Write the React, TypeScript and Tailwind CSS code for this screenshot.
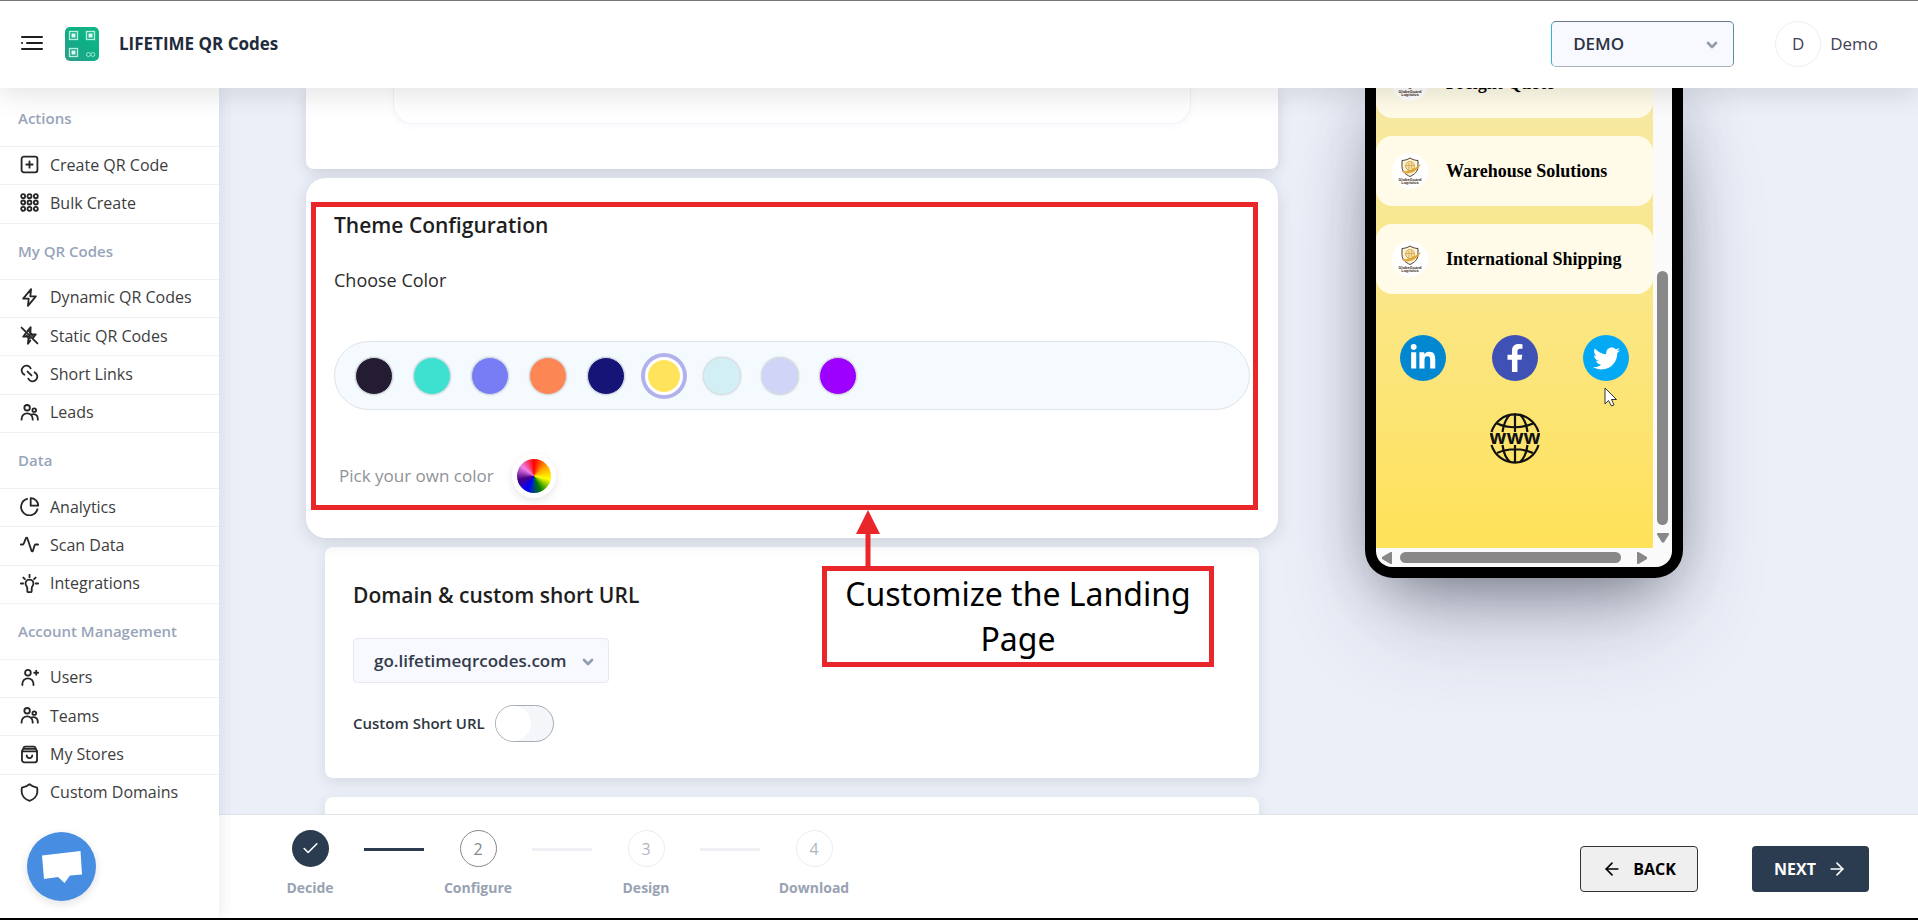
import { useState } from 'react';
import type { ReactNode } from 'react';
import { ArrowLeft, ArrowRight, Check, ChevronDown } from 'lucide-react';
import { FaFacebookF, FaLinkedinIn, FaTwitter } from 'react-icons/fa';

interface NavItem {
  label: string;
  icon: ReactNode;
}

interface NavSection {
  title: string;
  items: NavItem[];
}

const people = (
  <>
    <circle cx="9" cy="6" r="3.500" />
    <circle cx="18" cy="9" r="2.300" />
    <path d="M2 21v-1a7 7 0 0 1 14 0v1" />
    <path d="M14.500 14.500c4-1.500 8 .8 8 5V21" />
  </>
);

const sections: NavSection[] = [
  {
    title: 'Actions',
    items: [
      {
        label: 'Create QR Code',
        icon: (
          <>
            <rect x="2" y="2" width="20" height="20" rx="3" />
            <path d="M12 8v8M8 12h8" />
          </>
        ),
      },
      {
        label: 'Bulk Create',
        icon: (
          <>
            {[4, 12, 20].map((y) =>
              [4, 12, 20].map((x) => <circle key={`${x}-${y}`} cx={x} cy={y} r="2.500" />)
            )}
          </>
        ),
      },
    ],
  },
  {
    title: 'My QR Codes',
    items: [
      { label: 'Dynamic QR Codes', icon: <path d="M14 1.500 4 13.500h7l-1 9L20 10.500h-7z" /> },
      {
        label: 'Static QR Codes',
        icon: (
          <>
            <path d="M9.500 6.500 13.500 1.500 13 10.500h7l-3.500 4.500M13 18.500 10 22.500l1-9H4l3-4" />
            <path d="m2 2 20 20" />
            <path d="m11 6 5 6.500M8 12l4.500 4" />
          </>
        ),
      },
      {
        label: 'Short Links',
        icon: (
          <>
            <path d="M13.500 5.500A6 6 0 1 0 5.500 13.500" />
            <path d="M10.500 18.500A6 6 0 1 0 18.500 10.500" />
            <path d="m9.500 9.500 5 5" />
          </>
        ),
      },
      { label: 'Leads', icon: people },
    ],
  },
  {
    title: 'Data',
    items: [
      {
        label: 'Analytics',
        icon: (
          <>
            <path d="M9 2.500a10.500 10.500 0 1 0 13 13" />
            <path d="M13.500 1.500v9.500H23a9.500 9.500 0 0 0-9.500-9.500z" />
          </>
        ),
      },
      {
        label: 'Scan Data',
        icon: <path d="M1 12h2.500c.7 0 1-.4 1.300-1.200L7.500 4c.4-1 1.500-1 1.800 0l5.200 16c.3 1 1.400 1 1.800 0l2.200-7c.3-.7.700-1 1.300-1H23" />,
      },
      {
        label: 'Integrations',
        icon: (
          <>
            <path d="M12 1v3M1 12h3M20 12h3M4.200 4.500l2 2M19.800 4.500l-2 2" />
            <path d="M9.200 17.500c0-1.700-2.200-2.700-2.200-5.500a5 5 0 0 1 10 0c0 2.800-2.200 3.800-2.200 5.500v4a1.500 1.500 0 0 1-1.500 1.500h-2.600a1.500 1.500 0 0 1-1.500-1.500z" />
          </>
        ),
      },
    ],
  },
  {
    title: 'Account Management',
    items: [
      {
        label: 'Users',
        icon: (
          <>
            <circle cx="10" cy="6" r="3.600" />
            <path d="M3 21.500V20a7 7 0 0 1 14 0v1.500" />
            <path d="M20.500 3.500v5M18 6h5" />
          </>
        ),
      },
      { label: 'Teams', icon: people },
      {
        label: 'My Stores',
        icon: (
          <>
            <path d="M2.500 8h19v11a3 3 0 0 1-3 3h-13a3 3 0 0 1-3-3z" />
            <path d="M2.500 8 4.500 3.500A2 2 0 0 1 6.400 2h11.200a2 2 0 0 1 1.900 1.500L21.500 8" />
            <path d="M5 5h14M8.500 13a3.500 3.500 0 0 0 7 0" />
          </>
        ),
      },
      {
        label: 'Custom Domains',
        icon: <path d="M12 1.500c2.500 2 6 3.500 9.500 4.300.5 2 .5 4 .3 6.200-.5 5-4.300 8.500-9.800 10.500-5.500-2-9.300-5.500-9.800-10.500-.2-2.200-.2-4.200.3-6.200C6 5 9.500 3.500 12 1.500z" />,
      },
    ],
  },
];

const swatches = [
  { name: 'Midnight', className: 'bg-[#231c33]' },
  { name: 'Turquoise', className: 'bg-[#3ee0d0]' },
  { name: 'Periwinkle', className: 'bg-[#787df5]' },
  { name: 'Coral', className: 'bg-[#fc8755]' },
  { name: 'Navy', className: 'bg-[#141577]' },
  { name: 'Yellow', className: 'bg-[#ffe35b]' },
  { name: 'Ice', className: 'bg-[#d3eff6]' },
  { name: 'Lavender', className: 'bg-[#d0d5f7]' },
  { name: 'Violet', className: 'bg-[#9d00ff]' },
];

const steps = ['Decide', 'Configure', 'Design', 'Download'];

const links = ['Freight Quote', 'Warehouse Solutions', 'International Shipping'];

function BrandLogo() {
  return (
    <svg viewBox="0 0 34 34" className="h-[34px] w-[34px]" aria-hidden="true">
      <defs>
        <linearGradient id="brand" x1="0" y1="1" x2="1" y2="0">
          <stop offset="0" stopColor="#2f9c8c" />
          <stop offset="0.500" stopColor="#0fae86" />
          <stop offset="1" stopColor="#12b886" />
        </linearGradient>
      </defs>
      <rect width="34" height="34" rx="5" fill="url(#brand)" />
      {[
        [4, 4],
        [21, 4],
        [4, 21],
      ].map(([x, y]) => (
        <g key={`${x}-${y}`}>
          <rect x={x + 0.5} y={y + 0.5} width="8" height="8" fill="none" stroke="#b9f0df" strokeWidth="1.300" />
          <rect x={x + 2.5} y={y + 2.5} width="4" height="4" fill="#e3fbf4" />
        </g>
      ))}
      <g fill="none" stroke="#9fe8d2" strokeWidth="1">
        <circle cx="23.500" cy="27.500" r="2" />
        <circle cx="27.800" cy="27.500" r="2" />
      </g>
    </svg>
  );
}

function Header() {
  return (
    <header className="relative z-20 flex h-[87px] shrink-0 items-center bg-white pr-[40px] pb-0.5 pl-[21px] shadow-[0_8px_24px_rgba(0,0,0,0.10)]">
      <button aria-label="Toggle menu" className="mr-[22px] mb-0.5">
        <svg viewBox="0 0 22 16" className="h-4 w-[22px]" stroke="#1f1f1f" strokeWidth="2" strokeLinecap="round">
          <path d="M1 2h20M6 8h15M1 14h20M1 8h.1" />
        </svg>
      </button>
      <BrandLogo />
      <span className="ml-5 text-[17px] font-bold text-[#222b3c]">LIFETIME QR Codes</span>
      <div className="relative mr-[41px] ml-auto">
        <select
          aria-label="Workspace"
          className="h-[46px] w-[183px] appearance-none rounded-[5px] border border-t-[#6b7a8a] border-r-[#5d8ca3] border-b-[#a9b0ba] border-l-[#2bb8dc] bg-[#f7f9fe] pl-[21px] text-[17px] font-semibold text-[#2c3345]"
        >
          <option>DEMO</option>
        </select>
        <ChevronDown className="pointer-events-none absolute top-4 right-[14px] h-4 w-4 text-[#939cb0]" strokeWidth={4} />
      </div>
      <a href="#profile" className="flex items-center gap-[9px] text-[17px] text-[#3f4254]">
        <span className="flex h-[46px] w-[46px] items-center justify-center rounded-full border border-[#eeeeee]">D</span>
        Demo
      </a>
    </header>
  );
}

function Sidebar() {
  return (
    <aside className="relative z-10 flex w-[219px] shrink-0 flex-col bg-white shadow-[2px_0_14px_rgba(40,60,110,0.10)]">
      <nav className="flex min-h-0 flex-1 flex-col pt-[3px]">
        {sections.map((section, sectionIndex) => (
          <div key={section.title} className="contents">
            <h2 className="flex h-14 shrink-0 items-center border-b border-[#edf1f3] px-[18px] text-[15px] font-semibold text-[#98a4ba]">
              {section.title}
            </h2>
            {section.items.map((item, index) => (
              <a
                key={item.label}
                href="#nav"
                className={`flex flex-1 items-center gap-[11px] pb-0.5 pl-5 text-[16px] text-[#3d3d3d] ${
                  sectionIndex === sections.length - 1 && index === section.items.length - 1
                    ? ''
                    : 'border-b border-[#edf1f3]'
                }`}
              >
                <svg
                  viewBox="0 0 24 24"
                  className="h-[19px] w-[19px] shrink-0"
                  fill="none"
                  stroke="#262626"
                  strokeWidth="2.300"
                  strokeLinecap="round"
                  strokeLinejoin="round"
                  aria-hidden="true"
                >
                  {item.icon}
                </svg>
                {item.label}
              </a>
            ))}
          </div>
        ))}
      </nav>
      <div className="h-[106px] shrink-0 pt-5 pl-[27px]">
        <button
          aria-label="Open chat"
          className="flex h-[69px] w-[69px] items-center justify-center rounded-full bg-[#478ee2] shadow-[0_3px_10px_rgba(0,0,0,0.12)]"
        >
          <svg viewBox="0 0 40 32" className="h-8 w-10" fill="#fff">
            <path d="M0 4.500 38.500 0 40 23.500 28 24.500 22.500 32 16 26 2 28z" />
          </svg>
        </button>
      </div>
    </aside>
  );
}

function Callout() {
  return (
    <>
      <div className="pointer-events-none absolute top-6 right-5 bottom-7 left-[5px] border-[5px] border-[#e92629]" />
      <svg viewBox="0 0 24 56" className="absolute top-[332px] left-[550px] z-10 h-14 w-6" fill="#e92629">
        <path d="M12 0 24 24h-9.500v32h-5V24H0z" />
      </svg>
      <p className="absolute top-[388px] left-[516px] z-10 h-[101px] w-[392px] border-[5px] border-[#e92629] bg-white text-center font-['Noto_Sans',sans-serif] text-[32px] leading-[45px] text-black">
        Customize the Landing Page
      </p>
    </>
  );
}

function ThemeCard() {
  const [selected, setSelected] = useState('Yellow');

  return (
    <section className="relative z-10 mt-[9px] rounded-[20px] bg-white px-7 pt-[33px] pb-10 shadow-[0_4px_16px_rgba(60,65,75,0.16)]">
      <h2 className="text-[21px] leading-7 font-semibold text-[#1e1e1e]">Theme Configuration</h2>
      <p className="mt-[29px] text-[18px] leading-6 text-[#2b2b2b]">Choose Color</p>
      <div className="mt-[49px] flex h-[69px] items-center gap-5 rounded-full border border-[#e0e3e7] bg-[#f5fafe] pl-5">
        {swatches.map((swatch) => (
          <input
            key={swatch.name}
            type="radio"
            name="theme"
            aria-label={swatch.name}
            checked={selected === swatch.name}
            onChange={() => setSelected(swatch.name)}
            className={`h-[38px] w-[38px] appearance-none rounded-full border border-[#d8dee4] shadow-[0_0_2px_rgba(0,0,0,0.2)] checked:border-[3px] checked:border-white checked:shadow-none checked:ring-4 checked:ring-[#b3b1ec] ${swatch.className}`}
          />
        ))}
      </div>
      <div className="mt-11 flex h-11 items-center gap-[18px] pl-[5px]">
        <span className="text-[17px] text-[#8f9296]">Pick your own color</span>
        <button
          aria-label="Pick your own color"
          className="h-11 w-11 rounded-full border-[5px] border-white bg-[conic-gradient(red,orange,yellow,green,blue,indigo,violet,red)] bg-origin-border shadow-[0_3px_8px_rgba(0,0,0,0.10)]"
        />
      </div>
      <Callout />
    </section>
  );
}

function DomainCard() {
  const [custom, setCustom] = useState(false);

  return (
    <section className="mx-[19px] mt-[9px] rounded-lg bg-white px-7 pt-[34px] pb-9 shadow-[0_4px_14px_rgba(60,65,75,0.12)]">
      <h2 className="text-[21px] leading-7 font-semibold text-[#1e1e1e]">Domain &amp; custom short URL</h2>
      <div className="relative mt-[29px] w-[256px]">
        <select
          aria-label="Domain"
          className="h-[45px] w-full appearance-none rounded border border-[#e6e9f2] bg-[#f7f9fe] pl-5 text-[17px] font-semibold text-[#333b4b]"
        >
          <option>go.lifetimeqrcodes.com</option>
        </select>
        <ChevronDown className="pointer-events-none absolute top-4 right-[13px] h-4 w-4 text-[#939cb0]" strokeWidth={4} />
      </div>
      <label className="mt-[22px] flex items-center gap-[10px] text-[15px] font-semibold text-[#2e3540]">
        Custom Short URL
        <input
          type="checkbox"
          checked={custom}
          onChange={() => setCustom(!custom)}
          className="h-[37px] w-[59px] appearance-none rounded-full border border-[#a5acb6] bg-[#f4f6fa] before:block before:h-[35px] before:w-[35px] before:rounded-full before:bg-white checked:bg-[#478ee2] checked:before:ml-[22px]"
        />
      </label>
    </section>
  );
}

function CompanyBadge() {
  return (
    <svg viewBox="0 0 36 36" className="h-9 w-9 shrink-0" aria-hidden="true">
      <circle cx="18" cy="18" r="18" fill="#fff" />
      <path d="M18 5c2.500 1.600 5 2.300 8 2.500v6c0 5-3.500 8-8 10-4.500-2-8-5-8-10v-6C13 7.300 15.500 6.600 18 5z" fill="#fdf3d6" stroke="#4a4036" />
      <circle cx="18" cy="13" r="4.500" fill="#f6dfa6" stroke="#cf9f3e" strokeWidth="0.800" />
      <path d="M9 18c6 1 12-1 20-7-4 8-12 10.500-17 9z" fill="#dfa63b" />
      <path d="M16 9.500c1.500 3 1.500 6 0 8M20 9c-1 3-1 6 1 8M13.500 12.500h9" fill="none" stroke="#cf9f3e" strokeWidth="0.700" />
      <text x="18" y="27.500" textAnchor="middle" fontSize="4" fontWeight="700" fill="#3a2b20" fontFamily="Liberation Sans, sans-serif" textRendering="geometricPrecision">
        GlobeGuard
      </text>
      <text x="18" y="31" textAnchor="middle" fontSize="4" fontWeight="700" fill="#3a2b20" fontFamily="Liberation Sans, sans-serif" textRendering="geometricPrecision">
        Logistics
      </text>
    </svg>
  );
}

function WebIcon() {
  return (
    <svg viewBox="0 0 50 52" className="h-[52px] w-[50px]" fill="none" stroke="#111" strokeWidth="2.200">
      <path d="M1.500 20a24.500 24.500 0 0 1 47 0M1.500 33a24.500 24.500 0 0 0 47 0" />
      <path d="M25 1.500V20M25 33v17.500M7 11.500c11 5 25 5 36 0M7 41c11-5 25-5 36 0" />
      <path d="M20 2.500c-4 4-6.500 10-7.500 17.500M30 2.500c4 4 6.500 10 7.500 17.500M12.500 33c1 7.500 3.500 13.500 7.500 17M37.500 33c-1 7.500-3.500 13.500-7.500 17" />
      <text x="25" y="31.500" textAnchor="middle" fontSize="20" fontWeight="700" fill="#111" stroke="none" fontFamily="Open Sans, sans-serif">
        www
      </text>
    </svg>
  );
}

function PhonePreview() {
  return (
    <aside className="relative w-[318px] shrink-0 self-start rounded-b-[28px] border-x-[11px] border-b-[11px] border-black bg-black shadow-[0_50px_100px_-20px_rgba(50,50,80,0.30),0_30px_60px_-30px_rgba(0,0,0,0.35),0_0_60px_rgba(60,70,90,0.22)]">
      <div className="overflow-hidden rounded-b-2xl bg-[#fafafa]">
        <div className="flex h-[460px]">
          <div className="flex flex-1 flex-col justify-end overflow-hidden bg-linear-to-b from-[#f6e9a4] to-[#ffe258]">
            <div className="flex shrink-0 flex-col gap-[18px]">
              {links.map((link) => (
                <a
                  key={link}
                  href="#link"
                  className="flex h-[70px] items-center gap-[18px] rounded-2xl bg-[#fffbe8] pl-4 font-['Liberation_Serif',serif] text-[18px] font-bold text-black"
                >
                  <CompanyBadge />
                  {link}
                </a>
              ))}
            </div>
            <div className="mt-[41px] flex shrink-0 justify-between px-6">
              <a href="#linkedin" aria-label="LinkedIn" className="flex h-[46px] w-[46px] items-center justify-center rounded-full bg-[#0288d1] text-white">
                <FaLinkedinIn size={28} />
              </a>
              <a href="#facebook" aria-label="Facebook" className="flex h-[46px] w-[46px] items-center justify-center rounded-full bg-[#3f51b5] text-white">
                <FaFacebookF size={28} />
              </a>
              <a href="#twitter" aria-label="Twitter" className="flex h-[46px] w-[46px] items-center justify-center rounded-full bg-[#03a9f4] text-white">
                <FaTwitter size={27} />
              </a>
            </div>
            <a href="#website" aria-label="Website" className="mt-[31px] mb-[84px] shrink-0 self-center">
              <WebIcon />
            </a>
          </div>
          <div className="flex w-[19px] flex-col items-center justify-end">
            <div className="h-[254px] w-[11px] rounded-full bg-[#888]" />
            <svg viewBox="0 0 12 10" className="mt-2 mb-[5px] h-[10px] w-3" fill="#888">
              <path d="M1 0h10a1 1 0 0 1 1 1.500L7 9.500H5L0 1.500A1 1 0 0 1 1 0z" />
            </svg>
          </div>
        </div>
        <div className="flex h-[19px] items-center pr-[25px] pl-[6px]">
          <svg viewBox="0 0 10 12" className="h-3 w-[10px]" fill="#888">
            <path d="M10 1v10a1 1 0 0 1-1.500 1L0 7V5L8.500 0A1 1 0 0 1 10 1z" />
          </svg>
          <div className="mr-4 ml-2 h-[11px] flex-1 rounded-full bg-[#888]" />
          <svg viewBox="0 0 10 12" className="h-3 w-[10px]" fill="#888">
            <path d="M0 1v10a1 1 0 0 0 1.500 1L10 7V5L1.500 0A1 1 0 0 0 0 1z" />
          </svg>
        </div>
      </div>
      <svg viewBox="0 0 14 20" className="absolute top-[299px] left-[228px] h-5 w-[14px]" fill="#fff" stroke="#333" strokeWidth="1">
        <path d="M1 1v16l3.500-3.500L7.500 19l2.500-1.200L7.500 12.500H12.500z" />
      </svg>
    </aside>
  );
}

function Footer() {
  const current = 1;

  return (
    <footer className="relative flex h-[104px] shrink-0 items-start justify-between border-t border-[#dfe3e8] bg-white pr-[49px] pl-[37px]">
      <ol className="flex pt-[15px]">
        {steps.map((step, index) => (
          <li key={step} className="flex items-start">
            {index > 0 && (
              <span className={`mt-[18px] h-[3px] w-[60px] ${index <= current ? 'bg-[#2c3c4e]' : 'bg-[#eff0f4]'}`} />
            )}
            <span className="flex w-[108px] flex-col items-center">
              <span
                className={`flex h-[37px] w-[37px] items-center justify-center rounded-full text-[16px] ${
                  index < current
                    ? 'bg-[#2b3c50] text-white'
                    : index === current
                      ? 'border border-[#85898c] text-[#85898c]'
                      : 'border border-[#ececee] text-[#b1b5bd]'
                }`}
              >
                {index < current ? <Check size={19} /> : index + 1}
              </span>
              <span className="mt-[11px] text-[14px] leading-5 font-bold text-[#98a2b2]">{step}</span>
            </span>
          </li>
        ))}
      </ol>
      <div className="flex gap-[54px] pt-[31px]">
        <button className="flex h-[46px] w-[118px] items-center justify-center gap-[11px] rounded border border-[#333] bg-[#efefef] text-[16px] font-bold text-black">
          <ArrowLeft size={20} />
          BACK
        </button>
        <button className="flex h-[46px] w-[117px] items-center justify-center gap-[11px] rounded bg-[#2b3c50] text-[16px] font-bold text-white">
          NEXT
          <ArrowRight size={20} />
        </button>
      </div>
    </footer>
  );
}

export default function App() {
  return (
    <div className="flex h-screen flex-col overflow-hidden border-t border-b-2 border-t-[#777] border-b-black bg-[#ebeff8] font-['Open_Sans',sans-serif]">
      <Header />
      <div className="flex min-h-0 flex-1">
        <Sidebar />
        <div className="flex min-w-0 flex-1 flex-col">
          <main className="flex min-h-0 flex-1 gap-[87px] overflow-hidden pr-[235px] pl-[87px]">
            <div className="min-w-0 flex-1">
              <section className="h-[81px] rounded-b-lg bg-white px-[87px] shadow-[0_4px_14px_rgba(60,65,75,0.16)]">
                <div className="h-9 rounded-b-[20px] border-x border-b border-[#f3f4f9] shadow-[0_2px_6px_rgba(80,90,160,0.05)]" />
              </section>
              <ThemeCard />
              <DomainCard />
              <section className="mx-[19px] mt-[19px] h-20 rounded-lg bg-white shadow-[0_4px_14px_rgba(60,65,75,0.12)]" />
            </div>
            <PhonePreview />
          </main>
          <Footer />
        </div>
      </div>
    </div>
  );
}
